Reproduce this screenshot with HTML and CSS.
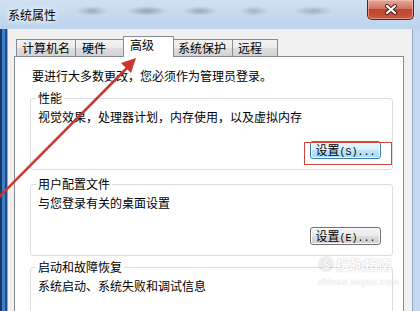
FILE: index.html
```html
<html>
<head>
    <title>系统属性</title>
    <link rel="stylesheet" href="styles.css">
</head>
<body>

    <div class="window">
        <div class="titlebar">
            <span class="title">系统属性</span>
            <button class="close">
                <svg width="14" height="11" viewBox="0 0 14 11">
                    <path d="M3 2 L11 9 M11 2 L3 9" stroke="#4a1c16" stroke-width="4" stroke-linecap="round"/>
                    <path d="M3 2 L11 9 M11 2 L3 9" stroke="#fff" stroke-width="2.2" stroke-linecap="round"/>
                </svg>
            </button>
        </div>

        <div class="frame">
            <div class="client">
                <div class="tabs">
                    <div class="tab tab-name">计算机名</div>
                    <div class="tab tab-hw">硬件</div>
                    <div class="tab tab-adv active">高级</div>
                    <div class="tab tab-prot">系统保护</div>
                    <div class="tab tab-remote">远程</div>
                </div>

                <div class="panel">
                    <p class="intro">要进行大多数更改，您必须作为管理员登录。</p>

                    <fieldset class="group">
                        <legend>性能</legend>
                        <p>视觉效果，处理器计划，内存使用，以及虚拟内存</p>
                        <div class="actions">
                            <span class="marked">
                                <button class="btn hot">设置<span class="key">(S)...</span></button>
                            </span>
                        </div>
                    </fieldset>

                    <fieldset class="group">
                        <legend>用户配置文件</legend>
                        <p>与您登录有关的桌面设置</p>
                        <div class="actions">
                            <button class="btn">设置<span class="key">(E)...</span></button>
                        </div>
                    </fieldset>

                    <fieldset class="group group-last">
                        <legend>启动和故障恢复</legend>
                        <p>系统启动、系统失败和调试信息</p>
                    </fieldset>
                </div>
            </div>
        </div>

        <div class="watermark">
            <div class="wm-brand"><span class="wm-logo">S</span>搜狗指南</div>
            <div class="wm-url">zhinan.sogou.com</div>
        </div>

        <svg class="arrow" width="420" height="311" viewBox="0 0 420 311">
            <line x1="-6" y1="202" x2="127" y2="68" stroke="#c9382f" stroke-width="2.5"/>
            <polygon points="136,58 131,73 121,63" fill="#c9382f"/>
        </svg>
    </div>

</body>
</html>
```

FILE: styles.css
```css
* {font-family: "Noto Sans CJK SC", sans-serif; box-sizing: border-box;}
html, body {margin: 0;}
body {width: 420px; height: 311px; overflow: hidden; font-size: 12px; color: #000; background: #c3d8ee;}
p {margin: 0; line-height: 16px;}

.window {position: relative; width: 420px; height: 311px; overflow: hidden;}

/* title bar, aero glass */
.titlebar {
    display: flex;
    justify-content: space-between;
    align-items: flex-start;
    height: 29px;
    padding: 0 6px 0 8px;
    background:
        radial-gradient(ellipse 16px 5px at 92px 11px, rgba(70,80,100,0.35), transparent),
        radial-gradient(ellipse 20px 5px at 147px 11px, rgba(70,80,100,0.4), transparent),
        radial-gradient(ellipse 17px 5px at 200px 11px, rgba(70,80,100,0.35), transparent),
        radial-gradient(ellipse 14px 5px at 254px 11px, rgba(70,80,100,0.3), transparent),
        radial-gradient(ellipse 20px 5px at 313px 11px, rgba(70,80,100,0.3), transparent),
        linear-gradient(#cfe0f2, #bcd3ec);
}
.title {margin-top: 7px; line-height: 16px; text-shadow: 0 0 5px #fff, 0 0 8px #fff;}
.close {
    width: 47px;
    height: 20px;
    padding: 0;
    border: 1px solid #5b2119;
    border-top: 0;
    border-radius: 0 0 5px 5px;
    background: linear-gradient(#e7a799, #d27564 45%, #c0432f 50%, #c75a3e);
    box-shadow: inset 0 0 0 1px rgba(255,210,200,0.5);
    display: flex;
    align-items: center;
    justify-content: center;
}
.close svg {display: block;}

/* window frame below the title */
.frame {
    height: 282px;
    overflow: hidden;
    padding: 0 8px;
    background:
        linear-gradient(to right, #17396a 0 2px, #3c7fc6 2px 5px, #1e4d8a 5px 7px, #8da9c9 7px 8px, transparent 8px),
        linear-gradient(to left, #c3d8ee 0 7px, #93a9c2 7px 8px, transparent 8px);
}
.client {background: #f0f0f0; padding: 7px 8px 0 6px;}

/* tabs */
.tabs {display: flex; align-items: flex-end; height: 20px; padding-left: 2px;}
.tab {
    height: 17px;
    margin-right: -1px;
    padding-left: 5px;
    line-height: 16px;
    border: 1px solid #898c95;
    border-bottom: 0;
    background: linear-gradient(#f3f3f3, #ebebeb 50%, #dedede 50%, #d2d2d2);
}
.tab-name {width: 60px;}
.tab-hw {width: 49px; padding-left: 6px;}
.tab-adv {width: 51px; padding-left: 6px;}
.tab-prot {width: 60px; padding-left: 4px;}
.tab-remote {width: 46px;}
.tab.active {
    position: relative;
    z-index: 1;
    height: 21px;
    margin-bottom: -1px;
    background: #fff;
}

/* page */
.panel {
    background: #fff;
    border: 1px solid #898c95;
    padding: 11px 10px 0 15px;
}
.intro {margin-left: 2px;}

.group {
    margin: 6px 0 0;
    padding: 0 11px 10px 7px;
    border: 1px solid #d5dfe5;
    border-radius: 3px;
    min-width: 0;
}
.group legend {padding: 0 2px; margin-left: -2px; line-height: 16px;}
.group p {margin-top: 3px;}
.group-last {margin-top: 3px; padding-bottom: 40px;}

.actions {display: flex; justify-content: flex-end; margin-top: 16px;}

.btn {
    width: 71px;
    height: 18px;
    padding: 0;
    font-size: 12px;
    line-height: 16px;
    color: #000;
    border: 1px solid #707070;
    border-radius: 3px;
    background: linear-gradient(#f2f2f2, #ebebeb 50%, #dddddd 50%, #cfcfcf);
    box-shadow: inset 0 0 0 1px #fcfcfc;
}
.btn.hot {
    border-color: #3c7fb1;
    background: linear-gradient(#eaf6fd, #d9f0fc 50%, #bee6fd 50%, #a7d9f5);
}
.key {font-family: "Liberation Mono", monospace; font-size: 10px;}

.marked {position: relative; display: block;}
.marked::after {
    content: "";
    position: absolute;
    left: -6px;
    top: 1px;
    right: -11px;
    bottom: -6px;
    border: 1px solid #d0453c;
}

/* watermark and annotation */
.watermark {position: absolute; left: 318px; top: 255px; color: #fff; opacity: 0.9;}
.wm-brand {
    display: flex;
    align-items: center;
    font-size: 14px;
    line-height: 18px;
    font-weight: bold;
    text-shadow: 0 0 1px rgba(0,0,0,0.35);
}
.wm-logo {
    width: 16px;
    height: 16px;
    margin-right: 2px;
    border-radius: 50%;
    background: rgba(0,0,0,0.07);
    text-align: center;
    font-size: 12px;
    line-height: 16px;
}
.wm-url {
    font-family: "DejaVu Sans", sans-serif;
    font-size: 8px;
    line-height: 10px;
    margin-top: 5px;
    letter-spacing: 0.5px;
    text-shadow: 0 0 1px rgba(0,0,0,0.3);
}

.arrow {position: absolute; left: 0; top: 0; pointer-events: none;}
```
